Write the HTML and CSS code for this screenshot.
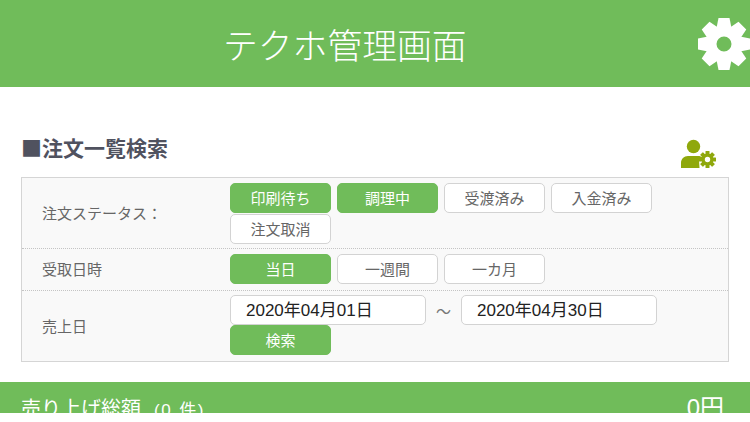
FILE: index.html
```html
<!DOCTYPE html>
<html lang="ja">
<head>
<meta charset="utf-8">
<title>テクホ管理画面</title>
<link rel="stylesheet" href="styles.css">
</head>
<body>
<div class="page">
  <header class="top">
    <h1 class="title">テクホ管理画面</h1>
    <svg class="gear" viewBox="-27 -27 54 54" aria-hidden="true">
      <circle class="gear-ring" r="13"/>
      <g class="gear-teeth">
        <path id="t" d="M-5.500 -26H5.500L7.500 -16H-7.500Z"/>
        <use href="#t" transform="rotate(45)"/>
        <use href="#t" transform="rotate(90)"/>
        <use href="#t" transform="rotate(135)"/>
        <use href="#t" transform="rotate(180)"/>
        <use href="#t" transform="rotate(225)"/>
        <use href="#t" transform="rotate(270)"/>
        <use href="#t" transform="rotate(315)"/>
      </g>
    </svg>
  </header>
  <main class="content">
    <div class="section-head">
      <h2 class="section-title">■注文一覧検索</h2>
      <svg class="user-gear" viewBox="0 0 36 30" aria-hidden="true">
        <circle cx="12.500" cy="7.500" r="6.700"/>
        <path d="M0 29V24C0 20 3 17 7 17H17C19 17 20.500 17.500 21.500 18.500L18 21L18.500 29Z"/>
        <g class="mini-teeth">
          <rect x="24.500" y="12" width="4" height="17" rx=".5"/>
          <rect x="24.500" y="12" width="4" height="17" rx=".5" transform="rotate(45 26.500 20.500)"/>
          <rect x="24.500" y="12" width="4" height="17" rx=".5" transform="rotate(90 26.500 20.500)"/>
          <rect x="24.500" y="12" width="4" height="17" rx=".5" transform="rotate(135 26.500 20.500)"/>
        </g>
        <circle class="mini-ring" cx="26.500" cy="20.500" r="4.300"/>
      </svg>
    </div>
    <section class="panel">
      <div class="row row-status">
        <div class="label">注文ステータス：</div>
        <div class="controls">
          <button class="btn on">印刷待ち</button>
          <button class="btn on">調理中</button>
          <button class="btn">受渡済み</button>
          <button class="btn">入金済み</button>
          <button class="btn">注文取消</button>
        </div>
      </div>
      <div class="row row-date">
        <div class="label">受取日時</div>
        <div class="controls">
          <button class="btn on">当日</button>
          <button class="btn">一週間</button>
          <button class="btn">一カ月</button>
        </div>
      </div>
      <div class="row row-sales">
        <div class="label">売上日</div>
        <div class="stack">
          <div class="range">
            <div class="date">2020年04月01日</div>
            <span class="tilde">～</span>
            <div class="date">2020年04月30日</div>
          </div>
          <button class="btn on search">検索</button>
        </div>
      </div>
    </section>
  </main>
  <footer class="total">
    <div class="total-label">売り上げ総額<span class="count">(0 件)</span></div>
    <div class="total-value">0円</div>
  </footer>
</div>
</body>
</html>
```

FILE: styles.css
```css
* { box-sizing: border-box; }
html, body { margin: 0; padding: 0; background: #fff; }
body { font-family: "Noto Sans CJK JP", "Noto Sans", sans-serif; }
.page { width: 750px; height: 413px; overflow: hidden; background: #fff; }

.top { height: 87px; background: #70bc5a; position: relative; display: flex; align-items: center; padding: 2px 0 0 223px; }
.title { margin: 0; font-size: 34.800px; font-weight: 300; line-height: 1; color: #fff; }
.gear { position: absolute; left: 697px; top: 16.500px; width: 54px; height: 54px; }
.gear-ring { fill: none; stroke: #fff; stroke-width: 11; }
.gear-teeth { fill: #fff; }

.content { padding: 46px 21px 0; }
.section-head { height: 44px; display: flex; justify-content: space-between; align-items: flex-start; }
.section-title { margin: -1px 0 0; font-size: 21px; line-height: 30px; font-weight: 700; color: #50525f; }
.user-gear { width: 36px; height: 30px; margin: 6px 12px 0 0; fill: #8fa80c; }
.mini-teeth { fill: #8fa80c; }
.mini-ring { fill: #fff; stroke: #8fa80c; stroke-width: 3.200; }

.panel { width: 708px; height: 185px; border: 1px solid #d5d5d5; background: #f9f9f9; }
.row { display: flex; border-bottom: 1px dotted #c4c4c4; }
.row:last-child { border-bottom: 0; }
.row-status { height: 71px; }
.row-date { height: 42px; }
.row-sales { height: 70px; }
.label { width: 208px; padding-left: 20px; font-size: 15px; color: #666; align-self: center; line-height: 20px; }
.row-date .label { margin-top: -2px; }
.controls { width: 430px; display: flex; flex-wrap: wrap; gap: 1px 6px; padding-top: 5px; align-content: flex-start; }
.btn { width: 101px; height: 30px; padding: 0; margin: 0; border: 1px solid #d3d3d3; border-radius: 5px; background: #fff; color: #666; font: inherit; font-size: 15px; line-height: 28px; }
.btn.on { background: #70bc5a; border-color: #70bc5a; color: #fff; }
.stack { padding-top: 4px; display: flex; flex-direction: column; align-items: flex-start; }
.range { display: flex; align-items: center; }
.date { width: 196px; height: 30px; border: 1px solid #d3d3d3; border-radius: 5px; background: #fff; color: #222; font-family: "Liberation Sans", "Noto Sans CJK JP", sans-serif; font-size: 17px; line-height: 30px; padding-left: 15px; }
.tilde { width: 35px; text-align: center; color: #777; font-size: 15px; }

.total { margin-top: 20px; height: 40px; background: #70bc5a; color: #fff; display: flex; justify-content: space-between; padding: 11px 26px 0 21px; }
.total-label { font-size: 20px; line-height: 30px; white-space: nowrap; }
.count { font-family: "Liberation Sans", "Noto Sans CJK JP", sans-serif; font-size: 17px; letter-spacing: 1.500px; word-spacing: 1px; margin-left: 13px; }
.total-value { font-family: "Liberation Sans", "Noto Sans CJK JP", sans-serif; font-size: 24px; line-height: 30px; }
```
